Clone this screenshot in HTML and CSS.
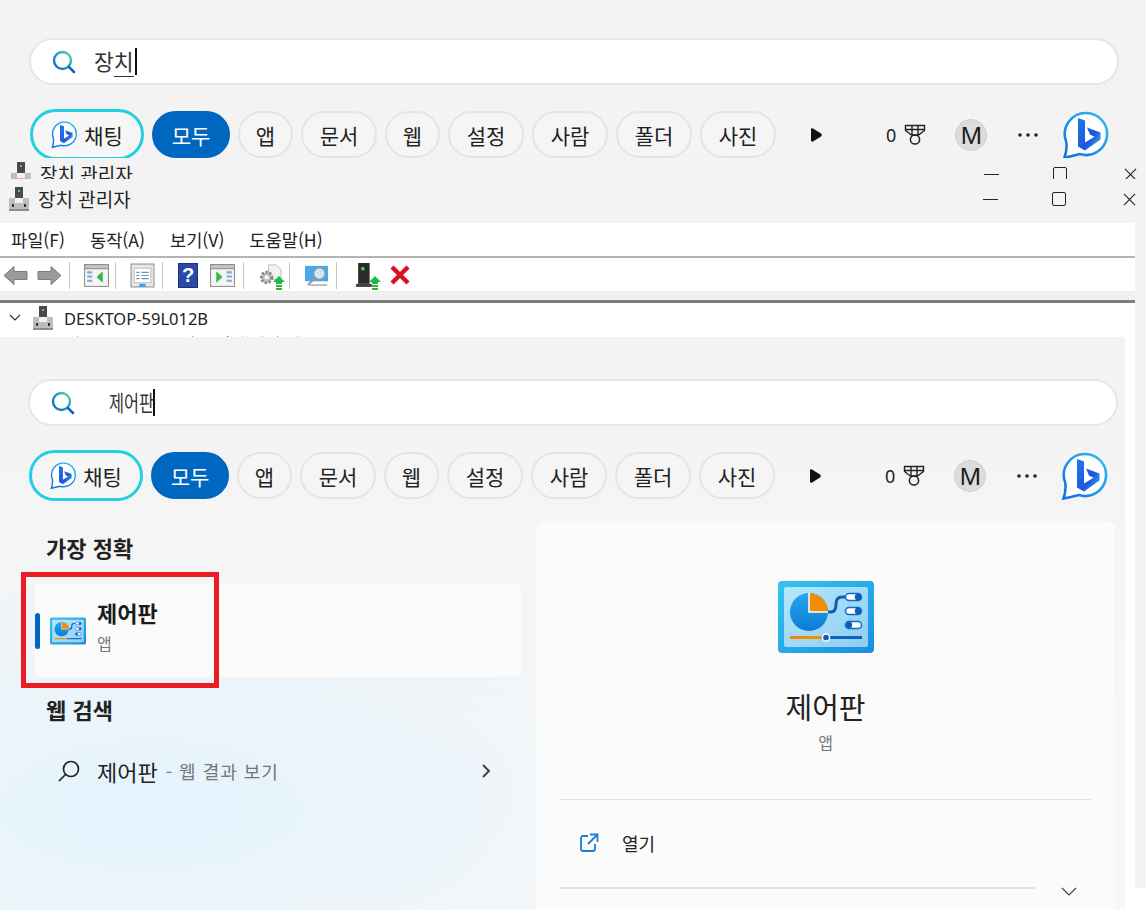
FILE: index.html
```html
<!DOCTYPE html>
<html lang="ko">
<head>
    <meta charset="UTF-8">
    <title>장치 관리자 / 제어판</title>
    <link rel="stylesheet" href="styles.css">
</head>
<body>
    <svg class="defs" width="0" height="0">
        <defs>
            <linearGradient id="ringGrad" x1="0" y1="1" x2="1" y2="0">
                <stop offset="0" stop-color="#1470e0"/>
                <stop offset="1" stop-color="#30bdf0"/>
            </linearGradient>
            <linearGradient id="bGrad" x1="0" y1="0" x2="1" y2="1">
                <stop offset="0" stop-color="#1b7ce8"/>
                <stop offset="0.6" stop-color="#1f54e0"/>
                <stop offset="1" stop-color="#32c6ee"/>
            </linearGradient>
            <linearGradient id="lensGrad" x1="0" y1="1" x2="1" y2="0">
                <stop offset="0" stop-color="#0a66c8"/>
                <stop offset="0.6" stop-color="#1aa0c8"/>
                <stop offset="1" stop-color="#6fdc9a"/>
            </linearGradient>
            <linearGradient id="frameGrad" x1="0" y1="0" x2="1" y2="1">
                <stop offset="0" stop-color="#36c4f2"/>
                <stop offset="1" stop-color="#1690e0"/>
            </linearGradient>
            <linearGradient id="screenGrad" x1="0" y1="0" x2="1" y2="1">
                <stop offset="0" stop-color="#b4e8fb"/>
                <stop offset="1" stop-color="#8fcdf1"/>
            </linearGradient>
            <linearGradient id="pieGrad" x1="0" y1="0" x2="0" y2="1">
                <stop offset="0" stop-color="#2aa6ee"/>
                <stop offset="1" stop-color="#0a7cd6"/>
            </linearGradient>

            <symbol id="lens" viewBox="0 0 24 24">
                <circle cx="10.5" cy="10.5" r="8.5" fill="none" stroke="url(#lensGrad)" stroke-width="2.4"/>
                <path d="M16.8 16.8 L22 22" stroke="#0a66c8" stroke-width="2.6" stroke-linecap="round"/>
            </symbol>
            <symbol id="bing" viewBox="0 0 48 48">
                <path d="M24 2a21 21 0 1 1-6 41.100C12.500 44.500 7 46 2.500 46.500 4.500 41 5 36 4.200 30.500A21 21 0 0 1 24 2Z" fill="#fff" stroke="url(#ringGrad)" stroke-width="2.600"/>
                <path d="M16 7l7 2.400v22l9.500-5.600-4.600-2.200-2.900-7 13.500 4.800v7.200L23 39.500 16 35.500Z" fill="url(#bGrad)"/>
            </symbol>
            <symbol id="medal" viewBox="0 0 22 22">
                <path d="M1.500 1.500h19v5l-6 4.500h-7l-6-4.500ZM1.500 5.500h19M8 1.500v9M14 1.500v9" fill="none" stroke="#222" stroke-width="1.400"/>
                <circle cx="11" cy="15.500" r="4.600" fill="none" stroke="#222" stroke-width="1.500"/>
            </symbol>
            <symbol id="dots" viewBox="0 0 20 4">
                <circle cx="2" cy="2" r="1.800" fill="#222"/>
                <circle cx="10" cy="2" r="1.800" fill="#222"/>
                <circle cx="18" cy="2" r="1.800" fill="#222"/>
            </symbol>
            <symbol id="device" viewBox="0 0 20 24">
                <rect x="6" y="0" width="8" height="12" fill="#4a4a4a"/>
                <rect x="9" y="3" width="2" height="2" fill="#3fdc5a"/>
                <rect x="0" y="11" width="20" height="13" fill="#bdbdbd"/>
                <rect x="6" y="11" width="8" height="5" fill="#f0f0f0"/>
                <rect x="3" y="17" width="2" height="3" fill="#333"/>
                <rect x="15" y="17" width="2" height="3" fill="#333"/>
                <rect x="0" y="22" width="20" height="2" fill="#8c8c8c"/>
            </symbol>
            <symbol id="panel" viewBox="0 0 96 72">
                <rect width="96" height="72" rx="4" fill="url(#frameGrad)"/>
                <rect x="6" y="6" width="84" height="60" rx="2" fill="url(#screenGrad)"/>
                <circle cx="31" cy="31" r="19" fill="url(#pieGrad)"/>
                <path d="M31 12a19 19 0 0 1 19 19H31Z" fill="#f28c05"/>
                <path d="M31 12v19h19" fill="none" stroke="#fff" stroke-width="1.500"/>
                <path d="M50 31h3c4 0 5-3 5-8 0-5 2-7 6-7h5" fill="none" stroke="#0f5fae" stroke-width="3"/>
                <rect x="67.500" y="12.500" width="16" height="7" rx="3.500" fill="#fff" stroke="#0c6ad0" stroke-width="1.500"/>
                <circle cx="80" cy="16" r="3.200" fill="#0c5fb8"/>
                <rect x="67.500" y="26.500" width="16" height="7" rx="3.500" fill="#fff" stroke="#0c6ad0" stroke-width="1.500"/>
                <circle cx="80" cy="30" r="3.200" fill="#0c5fb8"/>
                <rect x="67.500" y="40.500" width="16" height="7" rx="3.500" fill="#fff" stroke="#0c6ad0" stroke-width="1.500"/>
                <circle cx="71" cy="44" r="3.200" fill="#0c5fb8"/>
                <rect x="12" y="55" width="34" height="3" fill="#f28c05"/>
                <rect x="48" y="55" width="36" height="3" fill="#0c62c4"/>
                <circle cx="48" cy="56.500" r="3.600" fill="#0c5fb8" stroke="#fff" stroke-width="1.500"/>
            </symbol>
            <symbol id="winLeft" viewBox="0 0 24 24">
                <rect x=".5" y="1.500" width="23" height="21" fill="#f4f4f4" stroke="#8f8f8f"/>
                <rect x=".5" y="1.500" width="23" height="4" fill="#c4c4c4" stroke="#8f8f8f"/>
                <path d="M3 8h5v2H3ZM3 12h5v2H3ZM3 16h5v2H3Z" fill="#7fa8d8"/>
                <path d="M18 8v11l-6-5.500Z" fill="#35b84a"/>
            </symbol>
            <symbol id="winRight" viewBox="0 0 24 24">
                <rect x=".5" y="1.500" width="23" height="21" fill="#f4f4f4" stroke="#8f8f8f"/>
                <rect x=".5" y="1.500" width="23" height="4" fill="#c4c4c4" stroke="#8f8f8f"/>
                <path d="M16 8h5v2h-5ZM16 12h5v2h-5ZM16 16h5v2h-5Z" fill="#7fa8d8"/>
                <path d="M6 8v11l6-5.500Z" fill="#35b84a"/>
            </symbol>
            <symbol id="greenUp" viewBox="0 0 12 14">
                <path d="M6 0l6 6H9v2H3V6H0Z" fill="#25b83c"/>
                <rect x="3" y="9" width="6" height="2" fill="#25b83c"/>
                <rect x="3" y="12" width="6" height="2" fill="#25b83c"/>
            </symbol>
        </defs>
    </svg>

    <section class="search-panel">
        <div class="search-box">
            <svg class="lens"><use href="#lens"/></svg>
            <span class="query"><span>장</span><span class="composing">치</span></span>
            <span class="caret"></span>
        </div>
        <div class="tabs">
            <div class="tab chat"><svg class="chat-logo"><use href="#bing"/></svg>채팅</div>
            <div class="tab active">모두</div>
            <div class="tab single">앱</div>
            <div class="tab">문서</div>
            <div class="tab single">웹</div>
            <div class="tab">설정</div>
            <div class="tab">사람</div>
            <div class="tab">폴더</div>
            <div class="tab">사진</div>
            <svg class="play" viewBox="0 0 12 14"><path d="M1 1.500C1 .500 2 0 3 .500l8 5c1 .6 1 2.400 0 3l-8 5c-1 .5-2 0-2-1Z" fill="#111"/></svg>
            <span class="points">0</span>
            <svg class="medal"><use href="#medal"/></svg>
            <span class="avatar">M</span>
            <svg class="dots"><use href="#dots"/></svg>
            <svg class="bing"><use href="#bing"/></svg>
        </div>
    </section>

    <section class="titlebars">
        <div class="titlebar clipped">
            <svg class="title-icon"><use href="#device"/></svg>
            <span class="title-text">장치 관리자</span>
            <div class="win-btns">
                <span class="win-min"></span>
                <span class="win-max"></span>
                <svg class="win-close" viewBox="0 0 14 14"><path d="M1 1l12 12M13 1L1 13" stroke="#222" stroke-width="1.200"/></svg>
            </div>
        </div>
        <div class="titlebar">
            <svg class="title-icon"><use href="#device"/></svg>
            <span class="title-text">장치 관리자</span>
            <div class="win-btns">
                <span class="win-min"></span>
                <span class="win-max"></span>
                <svg class="win-close" viewBox="0 0 14 14"><path d="M1 1l12 12M13 1L1 13" stroke="#222" stroke-width="1.200"/></svg>
            </div>
        </div>
    </section>

    <div class="lower">
        <div class="column">
            <nav class="menu">
                <span>파일(F)</span>
                <span>동작(A)</span>
                <span>보기(V)</span>
                <span>도움말(H)</span>
            </nav>
            <div class="toolbar">
                <div class="tool-group first">
                    <svg class="tool" viewBox="0 0 25 20"><path d="M1 10l10-9v5h13v8H11v5Z" fill="#9a9a9a" stroke="#7c7c7c"/></svg>
                    <svg class="tool" viewBox="0 0 25 20"><path d="M24 10L14 1v5H1v8h13v5Z" fill="#9a9a9a" stroke="#7c7c7c"/></svg>
                </div>
                <div class="tool-group narrow"><svg class="tool"><use href="#winLeft"/></svg></div>
                <div class="tool-group">
                    <svg class="tool" viewBox="0 0 24 24">
                        <rect x="1" y="1" width="22" height="22" fill="#e8e8e8" stroke="#8f8f8f"/>
                        <rect x="4" y="5" width="16" height="14" fill="#fff" stroke="#c0c0c0"/>
                        <path d="M6 9h3M11 9h7M6 12h3M11 12h7M6 15h3M11 15h7" stroke="#7a8ea8"/>
                        <rect x="9" y="20" width="6" height="3" fill="#2ea8e8"/>
                    </svg>
                </div>
                <div class="tool-group help-group">
                    <span class="help-icon">?</span>
                    <svg class="tool"><use href="#winRight"/></svg>
                </div>
                <div class="tool-group narrow">
                    <span class="tool-stack">
                        <svg class="tool" viewBox="0 0 26 24">
                            <path d="M11 1h8l5 5v10H11Z" fill="#f2f2f2" stroke="#bdbdbd"/>
                            <circle cx="9" cy="14" r="5.500" fill="#c4c4c4" stroke="#8a8a8a" stroke-width="3" stroke-dasharray="2.500 1.500"/>
                            <circle cx="9" cy="14" r="2" fill="#fff"/>
                        </svg>
                        <svg class="up-arrow"><use href="#greenUp"/></svg>
                    </span>
                </div>
                <div class="tool-group">
                    <svg class="tool" viewBox="0 0 26 24">
                        <rect x="1" y="2" width="24" height="16" fill="#4aa8ea"/>
                        <path d="M6 22h18" stroke="#a8a8a8" stroke-width="1.500"/>
                        <circle cx="16" cy="10" r="6" fill="#cfe8f8" stroke="#8a9aa8" stroke-width="1.500"/>
                        <path d="M11 15l-7 7" stroke="#9a9a9a" stroke-width="2.200"/>
                    </svg>
                </div>
                <div class="tool-group last">
                    <span class="tool-stack">
                        <svg class="tool" viewBox="0 0 20 24">
                            <rect x="2" y="0" width="11" height="20" fill="#2c2c2c"/>
                            <rect x="5" y="4" width="3" height="3" fill="#3fe05a"/>
                            <rect x="0" y="20" width="15" height="3" fill="#444"/>
                        </svg>
                        <svg class="up-arrow"><use href="#greenUp"/></svg>
                    </span>
                    <svg class="tool cross" viewBox="0 0 20 20"><path d="M2 2l16 16M18 2L2 18" stroke="#dc0f1c" stroke-width="4.500"/></svg>
                </div>
            </div>
            <div class="toolbar-foot"></div>
            <div class="tree">
                <div class="tree-row">
                    <svg class="tree-chevron" viewBox="0 0 12 8"><path d="M1 1l5 5 5-5" fill="none" stroke="#333" stroke-width="1.200"/></svg>
                    <svg class="tree-icon"><use href="#device"/></svg>
                    <span>DESKTOP-59L012B</span>
                </div>
                <div class="tree-row child">
                    <svg class="tree-icon small" viewBox="0 0 20 24"><path d="M14 0v24H4l-4-8Z" fill="#a8a8a8"/></svg>
                    <span>오디오 입력 및 출력</span>
                </div>
            </div>

            <section class="start-panel">
                <div class="search-box">
                    <svg class="lens"><use href="#lens"/></svg>
                    <span class="query squeezed">제어판</span>
                    <span class="caret"></span>
                </div>
                <div class="tabs">
                    <div class="tab chat"><svg class="chat-logo"><use href="#bing"/></svg>채팅</div>
                    <div class="tab active">모두</div>
                    <div class="tab single">앱</div>
                    <div class="tab">문서</div>
                    <div class="tab single">웹</div>
                    <div class="tab">설정</div>
                    <div class="tab">사람</div>
                    <div class="tab">폴더</div>
                    <div class="tab">사진</div>
                    <svg class="play" viewBox="0 0 12 14"><path d="M1 1.500C1 .500 2 0 3 .500l8 5c1 .6 1 2.400 0 3l-8 5c-1 .5-2 0-2-1Z" fill="#111"/></svg>
                    <span class="points">0</span>
                    <svg class="medal"><use href="#medal"/></svg>
                    <span class="avatar">M</span>
                    <svg class="dots"><use href="#dots"/></svg>
                    <svg class="bing"><use href="#bing"/></svg>
                </div>

                <div class="results">
                    <div class="results-list">
                        <h3>가장 정확</h3>
                        <div class="best-match">
                            <span class="accent"></span>
                            <svg class="best-icon"><use href="#panel"/></svg>
                            <div class="best-text">
                                <div class="best-name">제어판</div>
                                <div class="best-type">앱</div>
                            </div>
                            <div class="highlight"></div>
                        </div>
                        <h3>웹 검색</h3>
                        <div class="web-row">
                            <svg class="web-lens" viewBox="0 0 24 24"><circle cx="14" cy="10" r="7.500" fill="none" stroke="#222" stroke-width="1.700"/><path d="M8.500 15.500L2 22" stroke="#222" stroke-width="1.700"/></svg>
                            <span class="web-query">제어판</span>
                            <span class="web-hint">- 웹 결과 보기</span>
                            <svg class="web-arrow" viewBox="0 0 10 14"><path d="M2 1l6 6-6 6" fill="none" stroke="#444" stroke-width="2"/></svg>
                        </div>
                    </div>
                    <aside class="detail">
                        <svg class="detail-icon"><use href="#panel"/></svg>
                        <div class="detail-name">제어판</div>
                        <div class="detail-type">앱</div>
                        <div class="detail-rule"></div>
                        <div class="detail-action">
                            <svg class="open-icon" viewBox="0 0 20 20"><path d="M9 3H4a2 2 0 0 0-2 2v11a2 2 0 0 0 2 2h10a2 2 0 0 0 2-2v-5M11 1.500h7.500V9M18 2l-9 9" fill="none" stroke="#1a7fd4" stroke-width="1.800"/></svg>
                            <span>열기</span>
                        </div>
                        <div class="detail-foot">
                            <span class="detail-rule thick"></span>
                            <svg class="more" viewBox="0 0 16 10"><path d="M1 1l7 7 7-7" fill="none" stroke="#444" stroke-width="1.200"/></svg>
                        </div>
                    </aside>
                </div>
            </section>
        </div>
        <div class="edge"></div>
    </div>
</body>
</html>
```

FILE: styles.css
```css
* {
    margin: 0;
    padding: 0;
    box-sizing: border-box;
}

html, body {
    height: 910px;
    overflow: hidden;
}

body {
    width: 1146px;
    background-color: white;
    color: #1b1b1b;
    font-family: "Noto Sans CJK KR", "Noto Sans", sans-serif;
}

.defs {
    display: block;
    height: 0;
}

/* search panels */
.search-panel {
    height: 158px;
    padding: 38px 27px 0 29px;
    background-color: #f3f3f3;
    overflow: hidden;
}

.search-box {
    display: flex;
    align-items: center;
    height: 47px;
    padding-left: 21px;
    background-color: white;
    border: 2px solid #e6e6e6;
    border-radius: 24px;
}

.lens {
    width: 24px;
    height: 24px;
}

.query {
    margin-left: 18px;
    padding-bottom: 2px;
    font-size: 21.5px;
    line-height: 28px;
    color: #333;
}

.query.squeezed {
    display: inline-block;
    margin-left: 34px;
    margin-right: -16px;
    white-space: nowrap;
    transform: scaleX(.76);
    transform-origin: left center;
}

.composing {
    border-bottom: 1px solid #333;
}

.caret {
    width: 2px;
    height: 27px;
    margin-left: 1px;
    background-color: #111;
}

.tabs {
    display: flex;
    align-items: center;
    gap: 8px;
    height: 47px;
    margin-top: 26px;
}

.tab {
    flex: none;
    display: flex;
    align-items: center;
    justify-content: center;
    width: 76px;
    height: 47px;
    background-color: #f5f5f5;
    border: 2px solid #e4e4e4;
    border-radius: 24px;
    font-size: 21px;
    color: #222;
    white-space: nowrap;
}

.tab.single {
    width: 55px;
}

.tab.active {
    width: 78px;
    background-color: #0067c0;
    border-color: #0067c0;
    color: white;
}

.tab.chat {
    gap: 6px;
    width: 114px;
    height: 51px;
    margin-left: 1px;
    border: 3px solid #22d0e2;
    border-radius: 26px;
    background-color: #f6f6f6;
}

.chat-logo {
    width: 27px;
    height: 27px;
}

.play {
    flex: none;
    width: 12px;
    height: 14px;
    margin-left: 26px;
}

.points {
    margin-left: 56px;
    font-family: "Noto Sans", sans-serif;
    font-size: 18px;
    color: #222;
}

.medal {
    flex: none;
    width: 22px;
    height: 22px;
}

.avatar {
    flex: none;
    width: 32px;
    height: 32px;
    margin-left: 21px;
    background-color: #dcdcdc;
    border: 1px solid #cfcfcf;
    border-radius: 50%;
    font-family: "Noto Sans", sans-serif;
    font-size: 24px;
    line-height: 29px;
    text-align: center;
}

.dots {
    flex: none;
    width: 20px;
    height: 4px;
    margin-left: 23px;
}

.bing {
    flex: none;
    width: 48px;
    height: 48px;
    margin-left: 16px;
}

/* window title bars */
.titlebars {
    background-color: #f3f3f3;
}

.titlebar {
    display: flex;
    align-items: center;
    height: 44px;
    padding-left: 9px;
    padding-bottom: 4px;
}

.titlebar.clipped {
    height: 21px;
    padding: 4px 0 0 11px;
    align-items: flex-start;
    overflow: hidden;
}

.title-icon {
    width: 20px;
    height: 24px;
}

.title-text {
    margin-left: 9px;
    font-size: 19px;
    line-height: 24px;
    color: #222;
}

.win-btns {
    display: flex;
    align-items: center;
    height: 24px;
    margin-left: auto;
    padding-right: 10px;
}

.clipped .win-btns {
    padding-right: 9px;
}

.win-min {
    width: 15px;
    height: 1px;
    background-color: #222;
}

.win-max {
    width: 14px;
    height: 14px;
    margin-left: 54px;
    border: 1.500px solid #222;
    border-radius: 2px;
}

.win-close {
    width: 13px;
    height: 13px;
    margin-left: 57px;
}

/* device manager */
.lower {
    display: flex;
    height: 687px;
}

.column {
    width: 1135px;
}

.edge {
    width: 11px;
    height: 665px;
    background-color: #f3f3f3;
}

.menu {
    display: flex;
    align-items: center;
    gap: 25px;
    height: 33px;
    padding-left: 11px;
    background-color: white;
    font-size: 17.600px;
    color: #222;
}

.toolbar {
    display: flex;
    height: 35px;
    padding-top: 4px;
    background-color: white;
    border-top: 2px solid #b4b4b4;
}

.tool-group {
    display: flex;
    align-items: flex-start;
    gap: 12px;
    width: 47px;
    height: 27px;
    padding-top: 1px;
    padding-left: 14px;
    border-right: 1px solid #c4c4c4;
}

.tool-group.narrow {
    width: 46px;
}

.tool-group.first {
    gap: 9px;
    width: 70px;
    padding-left: 3px;
}

.tool-group.help-group {
    width: 81px;
    padding-left: 15px;
}

.tool-group.last {
    width: 90px;
    padding-left: 17px;
    border-right: none;
}

.tool {
    display: block;
    width: 25px;
    height: 25px;
}

.tool.cross {
    margin-left: -1px;
    margin-top: 2px;
    width: 20px;
    height: 20px;
}

.tool-stack {
    position: relative;
    display: block;
    width: 25px;
    height: 26px;
}

.up-arrow {
    position: absolute;
    right: -2px;
    bottom: -1px;
    width: 12px;
    height: 14px;
}

.help-icon {
    display: block;
    width: 20px;
    height: 25px;
    background-color: #2b4aa8;
    border: 1px solid #1c3480;
    color: white;
    font-family: "Liberation Sans", sans-serif;
    font-size: 20px;
    font-weight: bold;
    line-height: 23px;
    text-align: center;
}

.toolbar-foot {
    height: 12px;
    background-color: #f0f0f0;
    border-bottom: 3px solid #7e7e7e;
}

.tree {
    height: 34px;
    overflow: hidden;
    background-color: white;
}

.tree-row {
    display: flex;
    align-items: center;
    height: 30px;
    padding-left: 9px;
    font-family: "Noto Sans", sans-serif;
    font-size: 16.500px;
    color: #222;
}

.tree-chevron {
    width: 12px;
    height: 8px;
}

.tree-icon {
    width: 20px;
    height: 24px;
    margin-left: 12px;
}

.tree-row span {
    margin-left: 11px;
}

.tree-row.child {
    margin-top: -4px;
    padding-left: 68px;
    font-family: "Noto Sans CJK KR", sans-serif;
}

.tree-icon.small {
    width: 14px;
    margin-left: 0;
}

.tree-row.child span {
    margin-left: 83px;
    color: #444;
}

/* start search results */
.start-panel {
    width: 1125px;
    height: 573px;
    padding: 42px 0 0 28px;
    overflow: hidden;
    background:
        radial-gradient(ellipse 620px 270px at 150px 470px, #e4f3fd 0%, rgba(228, 243, 253, 0) 100%),
        linear-gradient(#f3f3f3, #f8f8f8);
}

.start-panel .search-box {
    width: 1090px;
}

.start-panel .tabs {
    width: 1090px;
}

.results {
    display: flex;
    margin-top: 22px;
    height: 389px;
}

.results-list {
    width: 493px;
    padding-top: 10px;
}

.results-list h3 {
    margin-left: 18px;
    font-size: 22px;
    font-weight: 700;
    line-height: 32px;
    color: #222;
}

.best-match {
    position: relative;
    display: flex;
    align-items: center;
    width: 486px;
    height: 93px;
    margin: 21px 0 16px 7px;
    background-color: #fbfbfb;
    border-radius: 4px;
}

.accent {
    width: 5px;
    height: 36px;
    background-color: #0067c0;
    border-radius: 3px;
}

.best-icon {
    width: 36px;
    height: 28px;
    margin-left: 10px;
}

.best-text {
    margin-left: 11px;
    padding-bottom: 9px;
}

.best-name {
    font-size: 22px;
    font-weight: 700;
    line-height: 30px;
}

.best-type {
    margin-top: 4px;
    font-size: 16px;
    line-height: 24px;
    color: #767676;
}

.highlight {
    position: absolute;
    left: -14px;
    top: -12px;
    width: 198px;
    height: 116px;
    border: 5px solid #ed1c24;
}

.web-row {
    display: flex;
    align-items: center;
    height: 44px;
    margin-top: 24px;
    padding-left: 29px;
}

.web-lens {
    width: 24px;
    height: 24px;
}

.web-query {
    margin-left: 16px;
    font-size: 22px;
    color: #222;
}

.web-hint {
    margin-left: 8px;
    font-size: 18px;
    letter-spacing: 1px;
    color: #767676;
}

.web-arrow {
    width: 10px;
    height: 14px;
    margin-left: auto;
    margin-right: 30px;
}

.detail {
    display: flex;
    flex-direction: column;
    align-items: center;
    width: 579px;
    margin-left: 15px;
    padding: 60px 24px 0;
    background-color: #fbfbfb;
    border-radius: 8px 8px 0 0;
}

.detail-icon {
    width: 96px;
    height: 72px;
}

.detail-name {
    margin-top: 34px;
    font-size: 29px;
    line-height: 38px;
    color: #222;
}

.detail-type {
    margin-top: 6px;
    font-size: 16px;
    line-height: 22px;
    color: #767676;
}

.detail-rule {
    align-self: stretch;
    height: 1px;
    margin-top: 46px;
    background-color: #e2e2e2;
}

.detail-action {
    display: flex;
    align-items: center;
    gap: 23px;
    align-self: stretch;
    height: 87px;
    padding-left: 19px;
    padding-bottom: 2px;
    font-size: 18px;
    color: #222;
}

.open-icon {
    width: 20px;
    height: 20px;
}

.detail-foot {
    display: flex;
    align-items: center;
    align-self: stretch;
}

.detail-rule.thick {
    flex: 0 0 475px;
    height: 2px;
    margin-top: 0;
}

.more {
    width: 16px;
    height: 10px;
    margin-left: 26px;
    margin-bottom: 9px;
}
```
